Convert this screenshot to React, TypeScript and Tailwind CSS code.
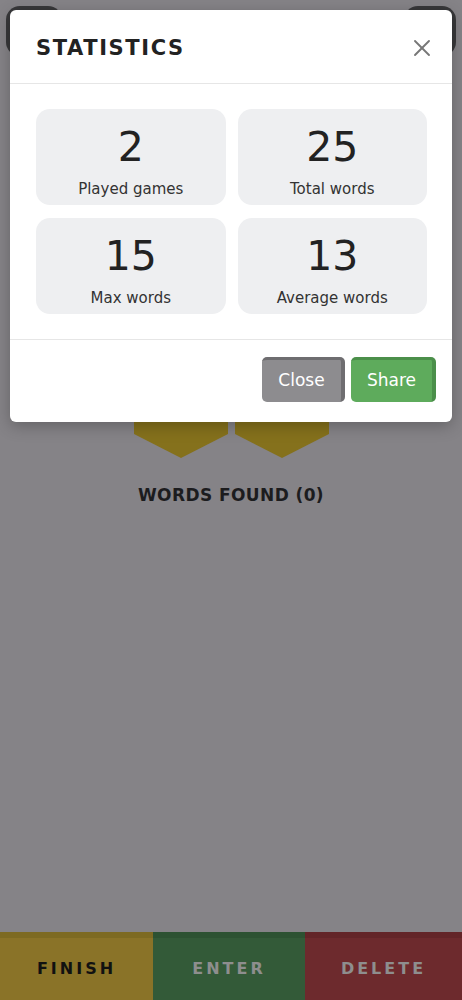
import { X } from "lucide-react";

const stats = [
  { value: "2", label: "Played games" },
  { value: "25", label: "Total words" },
  { value: "15", label: "Max words" },
  { value: "13", label: "Average words" },
];

function Hex() {
  return (
    <svg width="94" height="38" viewBox="0 0 94 38">
      <polygon points="0,0 94,0 94,14 47,38 0,14" fill="#85711c" />
    </svg>
  );
}

export default function App() {
  return (
    <div
      className="relative w-[462px] h-[1000px] bg-[#858387] overflow-hidden flex flex-col"
      style={{ fontFamily: '"DejaVu Sans", "Noto Sans", sans-serif' }}
    >
      {/* page behind the overlay */}
      <div className="flex justify-between px-[6px] pt-[6px]">
        <div className="w-[56px] h-[50px] rounded-[14px] bg-[#38383a]" />
        <div className="w-[52px] h-[50px] rounded-[14px] bg-[#38383a]" />
      </div>
      <div className="flex justify-center gap-[7px] mt-[364px]">
        <Hex />
        <Hex />
      </div>
      <div className="mt-[25px] text-center text-[17px] font-bold text-[#1c1c1e] tracking-[0.4px]">
        WORDS FOUND (0)
      </div>
      <div className="flex-1" />
      <div className="flex h-[68px]">
        <div className="w-[153px] bg-[#8a7328] border-t-[6px] border-[#7d6a22] flex items-center justify-center text-[16px] font-bold tracking-[3px] text-[#111]">
          FINISH
        </div>
        <div className="w-[152px] bg-[#335a38] border-t-[6px] border-[#2d5232] flex items-center justify-center text-[16px] font-bold tracking-[3px] text-[#8e8e8e]">
          ENTER
        </div>
        <div className="flex-1 bg-[#6d2a2d] border-t-[6px] border-[#632528] flex items-center justify-center text-[16px] font-bold tracking-[3px] text-[#8e8e8e]">
          DELETE
        </div>
      </div>

      {/* modal */}
      <div className="absolute left-[10px] top-[10px] w-[442px] bg-white rounded-[6px] shadow-[0_4px_16px_rgba(0,0,0,0.25)]">
        <div className="h-[74px] flex items-center justify-between pl-[26px] pr-[16px] border-b border-[#e6e6e6]">
          <span className="text-[21px] font-bold tracking-[1.6px] text-[#222] mt-[4px]">STATISTICS</span>
          <X size={28} strokeWidth={1.6} className="text-[#777] mt-[2px]" />
        </div>
        <div className="grid grid-cols-2 gap-x-[12px] gap-y-[13px] px-[25px] pl-[26px] py-[25px] border-b border-[#e6e6e6]">
          {stats.map((s) => (
            <div
              key={s.label}
              className="h-[96px] rounded-[14px] bg-[#eeeff1] flex flex-col items-center justify-center pt-[8px]"
            >
              <div className="text-[41px] leading-[46px] text-[#222] font-normal">{s.value}</div>
              <div className="text-[15px] leading-[20px] text-[#333] mt-[9px]">{s.label}</div>
            </div>
          ))}
        </div>
        <div className="flex justify-end gap-[6px] pt-[17px] pb-[20px] pr-[16px]">
          <button className="w-[83px] h-[45px] rounded-[5px] bg-[#8d8c8f] border-r-[4px] border-t-[3px] border-[#6e6d70] text-white text-[17px]">
            Close
          </button>
          <button className="w-[85px] h-[45px] rounded-[5px] bg-[#5eab5c] border-r-[4px] border-t-[3px] border-[#4b8f4a] text-white text-[17px]">
            Share
          </button>
        </div>
      </div>
    </div>
  );
}
